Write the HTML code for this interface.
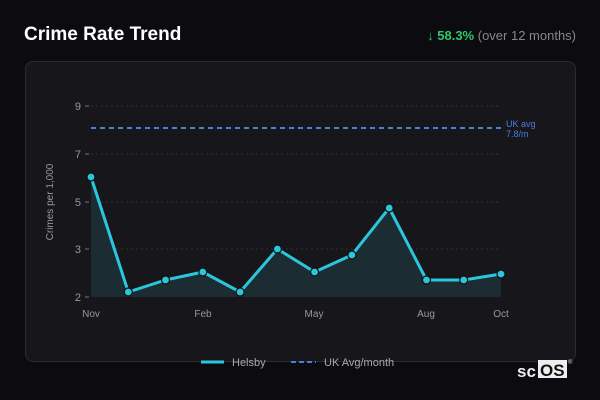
<!DOCTYPE html>
<html><head><meta charset="utf-8"><style>
body{margin:0;width:600px;height:400px;background:#0b0b10;font-family:"Liberation Sans","DejaVu Sans",sans-serif;overflow:hidden;position:relative}
.t{position:absolute;left:24px;top:24px;color:#fff;font-weight:bold;font-size:19px}
.s{position:absolute;right:24px;top:28px;font-size:13px;color:#888}
.s b{color:#2fc766}
.card{position:absolute;left:25px;top:61px;width:549px;height:299px;background:#16161b;border:1px solid #2b2b31;border-radius:8px}
svg{position:absolute;left:0;top:0}
</style></head><body>
<div class="t">Crime Rate Trend</div>
<div class="s"><b>↓ 58.3%</b> (over 12 months)</div>
<div class="card"></div>
<svg width="600" height="400" font-family="Liberation Sans, DejaVu Sans, sans-serif">
<g stroke="#333" stroke-dasharray="2,3" stroke-width="1">
<line x1="91" y1="106" x2="501" y2="106"/><line x1="91" y1="154" x2="501" y2="154"/><line x1="91" y1="202" x2="501" y2="202"/><line x1="91" y1="249" x2="501" y2="249"/>
</g>
<g stroke="#777"><line x1="85" y1="106" x2="89" y2="106"/><line x1="85" y1="154" x2="89" y2="154"/><line x1="85" y1="202" x2="89" y2="202"/><line x1="85" y1="249" x2="89" y2="249"/><line x1="85" y1="297" x2="89" y2="297"/></g>
<g fill="#999" font-size="11" text-anchor="end"><text x="81" y="110">9</text><text x="81" y="158">7</text><text x="81" y="206">5</text><text x="81" y="253">3</text><text x="81" y="301">2</text></g>
<text x="53" y="202" fill="#999" font-size="10" text-anchor="middle" transform="rotate(-90 53 202)">Crimes per 1,000</text>
<line x1="91" y1="128" x2="501" y2="128" stroke="#4a7fe0" stroke-width="2" stroke-dasharray="5,4"/>
<text x="506" y="127" fill="#4a7fe0" font-size="9">UK avg</text><text x="506" y="137" fill="#4a7fe0" font-size="9">7.8/m</text>
<path d="M91,177 L128.3,292 L165.5,280 L202.8,272 L240.1,292 L277.4,249 L314.6,272 L351.9,255 L389.2,208 L426.5,280 L463.7,280 L501,274 L501,297 L91,297Z" fill="#1b2d33"/>
<polyline points="91,177 128.3,292 165.5,280 202.8,272 240.1,292 277.4,249 314.6,272 351.9,255 389.2,208 426.5,280 463.7,280 501,274" fill="none" stroke="#2cc6dc" stroke-width="3" stroke-linejoin="round"/>
<g fill="#2cc6dc" stroke="#111" stroke-width="1.2">
<circle cx="91" cy="177" r="4"/><circle cx="128.3" cy="292" r="4"/><circle cx="165.5" cy="280" r="4"/><circle cx="202.8" cy="272" r="4"/><circle cx="240.1" cy="292" r="4"/><circle cx="277.4" cy="249" r="4"/><circle cx="314.6" cy="272" r="4"/><circle cx="351.9" cy="255" r="4"/><circle cx="389.2" cy="208" r="4"/><circle cx="426.5" cy="280" r="4"/><circle cx="463.7" cy="280" r="4"/><circle cx="501" cy="274" r="4"/>
</g>
<g fill="#999" font-size="10" text-anchor="middle"><text x="91" y="317">Nov</text><text x="203" y="317">Feb</text><text x="314" y="317">May</text><text x="426" y="317">Aug</text><text x="501" y="317">Oct</text></g>
<line x1="201" y1="362" x2="224" y2="362" stroke="#2cc6dc" stroke-width="3"/>
<text x="232" y="366" fill="#aaa" font-size="11">Helsby</text>
<line x1="291" y1="362" x2="316" y2="362" stroke="#4a7fe0" stroke-width="2" stroke-dasharray="5,3"/>
<text x="324" y="366" fill="#aaa" font-size="11">UK Avg/month</text>
<text x="517" y="377" fill="#eee" font-size="17" font-weight="bold">sc</text>
<rect x="538" y="360" width="29" height="18" fill="#eee"/>
<text x="540" y="376" fill="#111" font-size="17" font-weight="bold">OS</text>
<text x="568" y="364" fill="#ccc" font-size="6">®</text>
</svg>
</body></html>
